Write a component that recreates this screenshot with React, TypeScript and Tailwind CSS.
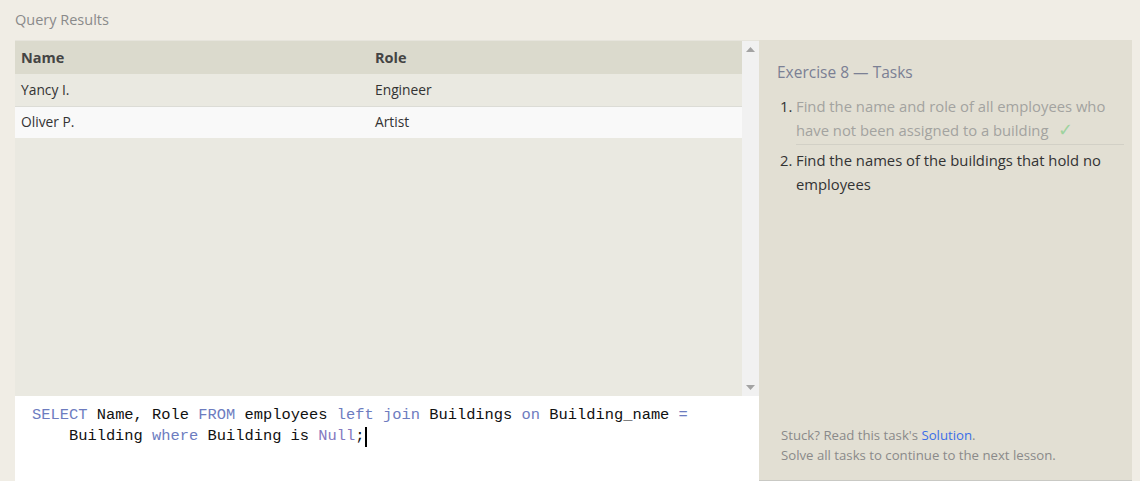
import React from "react";

const kw = "text-[#6d7cbf]";

export default function App() {
  return (
    <div
      className="h-[481px] w-[1140px] overflow-hidden bg-[#f0ede5] flex flex-col"
      style={{ fontFamily: '"Open Sans", "Noto Sans", sans-serif' }}
    >
      <div className="h-[40px] pl-[15px] pt-[9px] text-[14.5px] leading-[22px] text-[#8a8a8a]">
        Query Results
      </div>
      <div className="flex flex-1 min-h-0">
        {/* left column */}
        <div className="ml-[15px] w-[744px] flex flex-col">
          <div className="h-[356px] flex border-t border-[#e6e4dc] bg-[#eae9e1]">
            <div className="flex-1 flex flex-col">
              <div className="grid grid-cols-[354px_1fr] h-[33px] bg-[#dbdacd] items-center text-[14.5px] font-bold text-[#444]">
                <div className="pl-[6px]">Name</div>
                <div className="pl-[6px]">Role</div>
              </div>
              <div className="grid grid-cols-[354px_1fr] h-[33px] items-center border-b border-[#dcdcd6] text-[13.8px] text-[#333]">
                <div className="pl-[6px]">Yancy I.</div>
                <div className="pl-[6px]">Engineer</div>
              </div>
              <div className="grid grid-cols-[354px_1fr] h-[31px] bg-[#f9f9f9] items-center text-[13.8px] text-[#333]">
                <div className="pl-[6px]">Oliver P.</div>
                <div className="pl-[6px]">Artist</div>
              </div>
            </div>
            <div className="w-[17px] bg-[#f1f1f1] flex flex-col justify-between items-center py-[6px]">
              <svg width="9" height="5" viewBox="0 0 9 5">
                <path d="M0 5 L4.5 0 L9 5 Z" fill="#a3a3a3" />
              </svg>
              <svg width="9" height="5" viewBox="0 0 9 5">
                <path d="M0 0 L4.5 5 L9 0 Z" fill="#a3a3a3" />
              </svg>
            </div>
          </div>
          <div
            className="flex-1 bg-white pl-[17px] pt-[9px] text-[15.4px] leading-[21px] text-[#111]"
            style={{ fontFamily: '"Liberation Mono", "DejaVu Sans Mono", monospace' }}
          >
            <div className="whitespace-pre">
              <span className={kw}>SELECT</span> Name, Role <span className={kw}>FROM</span> employees{" "}
              <span className={kw}>left join</span> Buildings <span className={kw}>on</span> Building_name{" "}
              <span className={kw}>=</span>
            </div>
            <div className="whitespace-pre pl-[4ch] flex items-center">
              <span>
                Building <span className={kw}>where</span> Building is <span className="text-[#8479c0]">Null</span>;
              </span>
              <span className="inline-block w-[2px] h-[20px] bg-black" />
            </div>
          </div>
        </div>
        {/* right panel */}
        <div className="w-[373px] bg-[#e2dfd3] border-b border-[#c9c9c4] flex flex-col pl-[18px] pr-[8px]">
          <div className="pt-[20px] text-[15.5px] leading-[24px] text-[#7b8094]">Exercise 8 — Tasks</div>
          <div className="mt-[10px] text-[14.8px] leading-[24px]">
            <div className="flex pb-[2px]">
              <span className="w-[19px] shrink-0 pl-[3px] text-[#333]">1.</span>
              <div className="flex-1 border-b border-[#d2d0c6] pb-[2px] text-[#a3a3a0]">
                Find the name and role of all employees who have not been assigned to a building
                <span className="ml-[10px] text-[18px] leading-[20px] text-[#9ed39e]">✓</span>
              </div>
            </div>
            <div className="flex pt-[1px]">
              <span className="w-[19px] shrink-0 pl-[3px] text-[#333]">2.</span>
              <div className="flex-1 text-[#333]">Find the names of the buildings that hold no employees</div>
            </div>
          </div>
          <div className="mt-auto pb-[15px] text-[13.2px] leading-[20px] text-[#8a8a8a] pl-[4px]">
            <div>
              Stuck? Read this task's <span className="text-[#3b6ee8]">Solution</span>.
            </div>
            <div>Solve all tasks to continue to the next lesson.</div>
          </div>
        </div>
      </div>
    </div>
  );
}
